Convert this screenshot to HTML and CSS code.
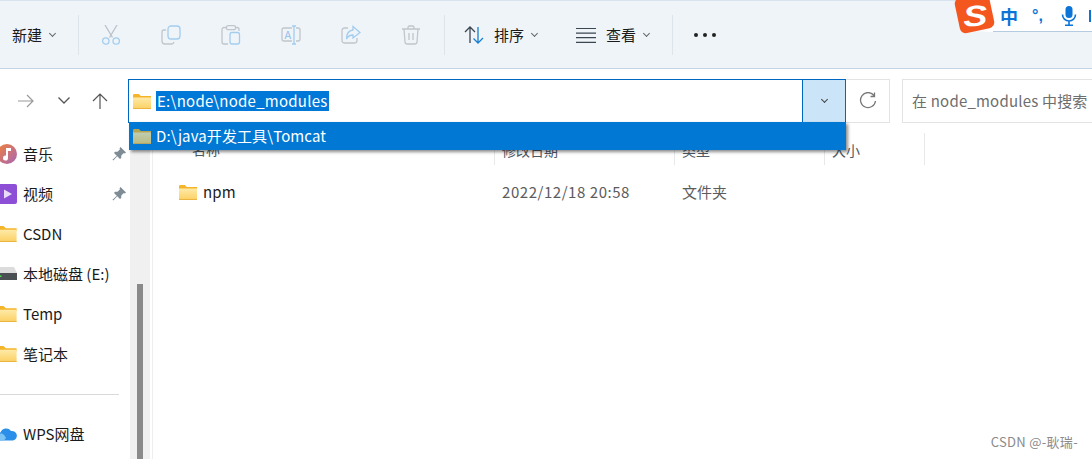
FILE: index.html
```html
<!DOCTYPE html>
<html lang="zh-CN">

<head>
    <meta charset="UTF-8">
    <title>node_modules</title>
    <link rel="stylesheet" href="styles.css">
</head>

<body>
    <svg class="defs" width="0" height="0">
        <defs>
            <linearGradient id="folderFront" x1="0" y1="0" x2="0" y2="1">
                <stop offset="0" stop-color="#ffeaa8" />
                <stop offset="1" stop-color="#fbd063" />
            </linearGradient>
            <linearGradient id="musicBg" x1="0" y1="0" x2="1" y2="1">
                <stop offset="0" stop-color="#f0813a" />
                <stop offset="1" stop-color="#a866b8" />
            </linearGradient>
            <symbol id="folder" viewBox="0 0 18 15">
                <path d="M0 1.500C0 .7.6 0 1.400 0h4.400l2 2H18v3H0z" fill="#f5b52a" />
                <path d="M0 3.500h18V14c0 .6-.4 1-1 1H1c-.6 0-1-.4-1-1z" fill="url(#folderFront)" />
                <path d="M0 14h18v1H0z" fill="#eeb440" />
            </symbol>
            <symbol id="pin" viewBox="0 0 14 14">
                <path d="M8.500 0 14 5.500 12.800 6.500 11.800 6 9.300 8.500 9.200 11 8 12 5.200 9.200 1.300 13.500.5 12.700 4.800 8.800 2 6 3 4.800 5.500 4.700 8 2.200 7.500 1.200z" fill="#7f8c96" />
            </symbol>
        </defs>
    </svg>

    <!-- 工具栏 -->
    <div class="toolbar">
        <span class="tool-btn new-btn">新建<i class="chev"></i></span>
        <span class="tool-sep"></span>
        <div class="tool-icons">
            <svg class="icon" viewBox="0 0 20 20" fill="none" stroke-width="1.300">
                <path d="M4 0 11.500 12.500M16 0 8.500 12.500" stroke="#b9c2ca" />
                <circle cx="4.800" cy="16" r="3.200" stroke="#a3cdee" />
                <circle cx="15.200" cy="16" r="3.200" stroke="#a3cdee" />
            </svg>
            <svg class="icon" viewBox="0 0 20 20" fill="none" stroke-width="1.300">
                <path d="M5 5H3a2 2 0 0 0-2 2v9a3 3 0 0 0 3 3h7a3 3 0 0 0 2-2" stroke="#c0c6cc" />
                <rect x="7" y="1" width="12" height="13" rx="3" stroke="#a3cdee" />
            </svg>
            <svg class="icon" viewBox="0 0 20 20" fill="none" stroke-width="1.300">
                <path d="M6 2.500H3a2 2 0 0 0-2 2V17a2 2 0 0 0 2 2h4M14 2.500h2a2 2 0 0 1 2 2V6" stroke="#c0c6cc" />
                <rect x="5.500" y=".7" width="9" height="4" rx="1.500" stroke="#c0c6cc" />
                <rect x="9" y="7.500" width="9.500" height="11.500" rx="2" stroke="#a3cdee" />
            </svg>
            <svg class="icon" viewBox="0 0 20 20" fill="none" stroke-width="1.300">
                <path d="M11 3H3a2 2 0 0 0-2 2v9a2 2 0 0 0 2 2h8M15 3h2a2 2 0 0 1 2 2v9a2 2 0 0 1-2 2h-2" stroke="#c0c6cc" />
                <path d="M11 1h4M13 1v18M11 19h4" stroke="#a3cdee" />
                <text x="3.500" y="14" class="icon-letter">A</text>
            </svg>
            <svg class="icon" viewBox="0 0 20 20" fill="none" stroke-width="1.300">
                <path d="M7 3H3.500a2.500 2.500 0 0 0-2.500 2.500v10A2.500 2.500 0 0 0 3.500 18h10a2.500 2.500 0 0 0 2.500-2.500V13" stroke="#c0c6cc" />
                <path d="M12 1.500 19 7.500 12 13V10C9 10 7 11 5.500 14 5.500 9 8 5.500 12 5z" stroke="#a3cdee" />
            </svg>
            <svg class="icon" viewBox="0 0 20 20" fill="none" stroke="#c0c6cc" stroke-width="1.300">
                <path d="M1 4h18M7 4V2.500A1.500 1.500 0 0 1 8.500 1h3A1.500 1.500 0 0 1 13 2.500V4M3 4l1 13a2.200 2.200 0 0 0 2.200 2h7.600a2.200 2.200 0 0 0 2.200-2l1-13M8 8v7M12 8v7" />
            </svg>
        </div>
        <span class="tool-sep sep-b"></span>
        <svg class="icon sort-icon" viewBox="0 0 20 20" fill="none" stroke-width="1.300">
            <path d="M6 18V2M1 7l5-5 5 5" stroke="#3c4650" />
            <path d="M14 2v16M9.500 13.500l4.500 4.500 5-5" stroke="#1a7fd0" />
        </svg>
        <span class="tool-btn">排序<i class="chev"></i></span>
        <svg class="icon view-icon" viewBox="0 0 20 20" fill="none" stroke="#3c4650" stroke-width="1.200">
            <path d="M0 3.500h20M0 8.100h20M0 12.700h20M0 17.300h20" />
        </svg>
        <span class="tool-btn">查看<i class="chev"></i></span>
        <span class="tool-sep sep-c"></span>
        <span class="dots"><b></b><b></b><b></b></span>
    </div>

    <!-- 输入法状态条 -->
    <div class="ime">
        <span class="ime-logo"><em>S</em></span>
        <span class="ime-zh">中</span>
        <span class="ime-dot">°,</span>
        <svg class="ime-mic" viewBox="0 0 16 20" fill="none" stroke="#0b74d6" stroke-width="1.600">
            <rect x="4.500" y="0" width="7" height="12" rx="3.500" fill="#0b74d6" stroke="none" />
            <path d="M1.500 8.500a6.500 6.500 0 0 0 13 0M8 15v4M4 19.300h8" />
        </svg>
        <span class="ime-edge"></span>
    </div>

    <!-- 地址栏 -->
    <div class="navbar">
        <svg class="nav-forward" viewBox="0 0 16 14" fill="none" stroke="#9a9a9a" stroke-width="1.200">
            <path d="M0 7h15M9 1l6 6-6 6" />
        </svg>
        <svg class="nav-down" viewBox="0 0 12 7" fill="none" stroke="#555" stroke-width="1.300">
            <path d="M.5.5 6 6l5.500-5.500" />
        </svg>
        <svg class="nav-up" viewBox="0 0 16 16" fill="none" stroke="#555" stroke-width="1.200">
            <path d="M8 16V1M1 8l7-7 7 7" />
        </svg>
        <div class="address">
            <svg class="folder addr-folder">
                <use href="#folder" />
            </svg>
            <span class="addr-text">E:\node\node_modules</span>
            <span class="addr-drop"><i class="chev chev-dark"></i></span>
        </div>
        <div class="refresh">
            <svg viewBox="0 0 18 18" width="18" height="18" fill="none" stroke="#777" stroke-width="1.300">
                <path d="M15 3.500A7.500 7.500 0 1 0 16.500 9M15.500 .5v4h-4" />
            </svg>
        </div>
        <div class="search">在 node_modules 中搜索</div>
    </div>

    <!-- 下拉历史记录 -->
    <div class="history">
        <svg class="folder history-folder">
            <use href="#folder" />
        </svg>
        <span class="history-text">D:\java开发工具\Tomcat</span>
    </div>

    <div class="content">
        <ul class="sidebar">
            <li>
                <svg class="side-icon" viewBox="0 0 20 20">
                    <circle cx="10" cy="10" r="10" fill="url(#musicBg)" />
                    <path d="M9 4h5v3h-3v7a2.500 2.500 0 1 1-2-2.400z" fill="#fff" />
                </svg>
                音乐
                <svg class="pin">
                    <use href="#pin" />
                </svg>
            </li>
            <li>
                <svg class="side-icon" viewBox="0 0 20 20">
                    <rect width="20" height="20" rx="2" fill="#8d4fd6" />
                    <path d="M7 5.500 15 10l-8 4.500z" fill="#e9dcfa" />
                    <path d="M1 3h2v2H1zM1 7h2v2H1zM1 11h2v2H1zM1 15h2v2H1z" fill="#d9c5f5" />
                </svg>
                视频
                <svg class="pin">
                    <use href="#pin" />
                </svg>
            </li>
            <li>
                <svg class="side-icon folder-side">
                    <use href="#folder" />
                </svg>
                CSDN
            </li>
            <li>
                <svg class="side-icon" viewBox="0 0 20 14">
                    <path d="M3 0h14l3 6H0z" fill="#dcdcdc" />
                    <rect y="6" width="20" height="7" fill="#4a4f52" />
                    <rect x="3" y="8.500" width="1.500" height="1.500" fill="#4de04d" />
                </svg>
                本地磁盘 (E:)
            </li>
            <li>
                <svg class="side-icon folder-side">
                    <use href="#folder" />
                </svg>
                Temp
            </li>
            <li>
                <svg class="side-icon folder-side">
                    <use href="#folder" />
                </svg>
                笔记本
            </li>
            <li class="side-line"></li>
            <li>
                <svg class="side-icon" viewBox="0 0 20 14">
                    <path d="M4 13.500a4 4 0 0 1-.5-8A6 6 0 0 1 14 4a4.800 4.800 0 0 1 2 9.500z" fill="#2a8fe8" />
                    <path d="M0 11c3-6 6-6 9 0l-2 2.500H3z" fill="#7cc4f5" />
                </svg>
                WPS网盘
            </li>
        </ul>
        <div class="scrollbar"><div class="thumb"></div></div>

        <div class="main">
            <div class="head-row">
                <span class="col-name">名称</span>
                <span class="col-date">修改日期</span>
                <span class="col-type">类型</span>
                <span class="col-size">大小</span>
            </div>
            <div class="file-row">
                <span class="col-name">
                    <svg class="folder">
                        <use href="#folder" />
                    </svg>
                    <span class="file-name">npm</span>
                </span>
                <span class="col-date">2022/12/18 20:58</span>
                <span class="col-type">文件夹</span>
            </div>
        </div>
    </div>

    <div class="mark">CSDN @-耿瑞-</div>
</body>

</html>
```

FILE: styles.css
```css
* {
    padding: 0;
    margin: 0;
    box-sizing: border-box;
}

body {
    width: 1092px;
    height: 459px;
    overflow: hidden;
    position: relative;
    background: #fff;
    font-family: "Noto Sans CJK SC", "Noto Sans", sans-serif;
    font-size: 15px;
    color: #1a1a1a;
}

.defs {
    position: absolute;
}

.toolbar {
    height: 69px;
    display: flex;
    align-items: center;
    padding: 1px 0 0 12px;
    background: #eff4f9;
    border-top: 1px solid #d7e3ee;
    border-bottom: 1px solid #c3d4e4;
}

.tool-btn {
    display: flex;
    align-items: center;
    line-height: 20px;
    white-space: nowrap;
}

.chev {
    display: block;
    width: 5px;
    height: 5px;
    margin: -3px 0 0 8px;
    border-right: 1px solid #666;
    border-bottom: 1px solid #666;
    transform: rotate(45deg);
}

.new-btn {
    width: 66px;
}

.tool-sep {
    width: 1px;
    height: 40px;
    background: #dde4ea;
}

.tool-icons {
    display: flex;
    gap: 40px;
    margin-left: 22px;
}

.icon {
    width: 20px;
    height: 20px;
    flex: none;
}

.icon-letter {
    font-size: 11px;
    fill: #8fbfe8;
    stroke: none;
}

.sep-b {
    margin-left: 23px;
}

.sort-icon {
    margin: 0 10px 0 19px;
}

.view-icon {
    margin: 0 10px 0 39px;
}

.sep-c {
    margin-left: 23px;
}

.dots {
    display: flex;
    gap: 5px;
    margin-left: 21px;
}

.dots b {
    width: 4px;
    height: 4px;
    border-radius: 50%;
    background: #222;
}

.ime {
    position: absolute;
    top: 0;
    right: 0;
    width: 137px;
    height: 32px;
    display: flex;
    align-items: center;
    padding-left: 45px;
    background: linear-gradient(90deg, transparent 20px, #fff 38px);
    color: #0b74d6;
}

.ime::after {
    content: "";
    position: absolute;
    left: 38px;
    right: 0;
    bottom: 0;
    height: 1px;
    background: #b7cbe0;
}

.ime-logo {
    position: absolute;
    left: 2px;
    top: -5px;
    width: 35px;
    height: 36px;
    padding-top: 8px;
    border-radius: 6px;
    background: #f4571d;
    transform: rotate(-12deg);
    text-align: center;
    color: #fff;
    font: bold italic 29px/26px "Liberation Sans", sans-serif;
}

.ime-logo em {
    display: block;
    height: 26px;
    transform: rotate(8deg) scaleX(1.250);
}

.ime-zh {
    font-size: 18px;
    font-weight: 700;
    line-height: 20px;
}

.ime-dot {
    width: 20px;
    margin-left: 14px;
    font: bold 16px/20px "Liberation Sans", sans-serif;
}

.ime-mic {
    width: 16px;
    height: 20px;
    margin-left: 9px;
}

.ime-edge {
    width: 2px;
    height: 12px;
    margin-left: 12px;
    background: #0b74d6;
}

.navbar {
    height: 54px;
    display: flex;
    align-items: flex-start;
    padding-top: 10px;
}

.nav-forward {
    width: 16px;
    height: 14px;
    margin: 15px 0 0 18px;
}

.nav-down {
    width: 12px;
    height: 7px;
    margin: 18px 0 0 24px;
}

.nav-up {
    width: 16px;
    height: 16px;
    margin: 14px 0 0 22px;
}

.address {
    position: relative;
    width: 718px;
    height: 44px;
    margin-left: 20px;
    display: flex;
    align-items: center;
    padding-left: 4px;
    border: 1px solid #0067c0;
}

.folder {
    width: 18px;
    height: 15px;
    flex: none;
}

.addr-text {
    margin-left: 5px;
    padding: 0 1px;
    height: 20px;
    line-height: 20px;
    letter-spacing: 0.25px;
    background: #0078d7;
    color: #fff;
}

.addr-drop {
    position: absolute;
    top: -1px;
    right: -1px;
    width: 44px;
    height: 44px;
    display: flex;
    align-items: center;
    justify-content: center;
    background: #cce4f7;
    border: 1px solid #0067c0;
}

.addr-drop .chev {
    margin: -3px 0 0;
}

.chev-dark {
    border-color: #444;
}

.refresh {
    width: 44px;
    height: 44px;
    display: flex;
    align-items: center;
    justify-content: center;
    border: 1px solid #e3e3e3;
    border-left: 0;
}

.search {
    flex: 1;
    height: 44px;
    margin-left: 12px;
    padding-left: 9px;
    line-height: 42px;
    letter-spacing: 0.2px;
    white-space: nowrap;
    color: #6d6d6d;
    border: 1px solid #e3e3e3;
    border-right: 0;
}

.history {
    position: absolute;
    left: 129px;
    top: 122px;
    width: 717px;
    height: 28px;
    display: flex;
    align-items: center;
    gap: 5px;
    padding: 0 0 2px 4px;
    background: #0078d4;
    color: #fff;
    box-shadow: 2px 2px 3px rgba(0, 0, 0, 0.45);
    z-index: 2;
}

.history-folder {
    margin-top: 2px;
    opacity: 0.75;
}

.history-text {
    letter-spacing: 0.1px;
}

.content {
    height: 336px;
    display: flex;
}

.sidebar {
    width: 130px;
    padding-top: 11px;
    list-style-type: none;
}

.sidebar li {
    position: relative;
    height: 40px;
    display: flex;
    align-items: center;
    gap: 6px;
    margin-left: -3px;
    padding-bottom: 2px;
    white-space: nowrap;
}

.sidebar li.side-line {
    height: 1px;
    margin: 20px 11px 19px 0;
    padding: 0;
    background: #d9d9d9;
}

.side-icon {
    width: 20px;
    height: 20px;
    flex: none;
    margin-top: 2px;
}

.folder-side {
    height: 16px;
}

.pin {
    position: absolute;
    left: 115px;
    top: 13px;
    width: 14px;
    height: 14px;
}

.scrollbar {
    width: 20px;
    padding: 161px 0 0 7px;
    background: #f0f0f0;
}

.thumb {
    width: 6px;
    height: 175px;
    background: #8a8a8a;
}

.main {
    flex: 1;
    margin-left: 2px;
    padding-top: 10px;
    border-left: 1px solid #eee;
}

.head-row,
.file-row {
    display: flex;
    align-items: center;
}

.head-row {
    height: 32px;
    font-size: 14px;
    color: #4c5a67;
}

.file-row {
    height: 40px;
    margin-top: 7px;
    padding-bottom: 2px;
}

.col-name {
    width: 342px;
    display: flex;
    align-items: center;
    padding-left: 39px;
}

.file-row .col-name {
    padding-left: 26px;
}

.file-row .folder {
    margin-top: 2px;
}

.file-name {
    margin-left: 6px;
    letter-spacing: 0.2px;
}

.col-date {
    width: 180px;
    padding-left: 7px;
}

.col-type {
    width: 150px;
    padding-left: 7px;
}

.col-size {
    width: 100px;
    padding-left: 7px;
}

.head-row span {
    height: 32px;
    line-height: 34px;
    border-right: 1px solid #e8e8e8;
}

.file-row .col-date,
.file-row .col-type {
    color: #5c5c5c;
}

.file-row .col-date {
    letter-spacing: 0.55px;
}

.mark {
    position: absolute;
    right: 14px;
    top: 433px;
    font-size: 13px;
    line-height: 18px;
    letter-spacing: 0.3px;
    color: #8a8a8a;
}
```
